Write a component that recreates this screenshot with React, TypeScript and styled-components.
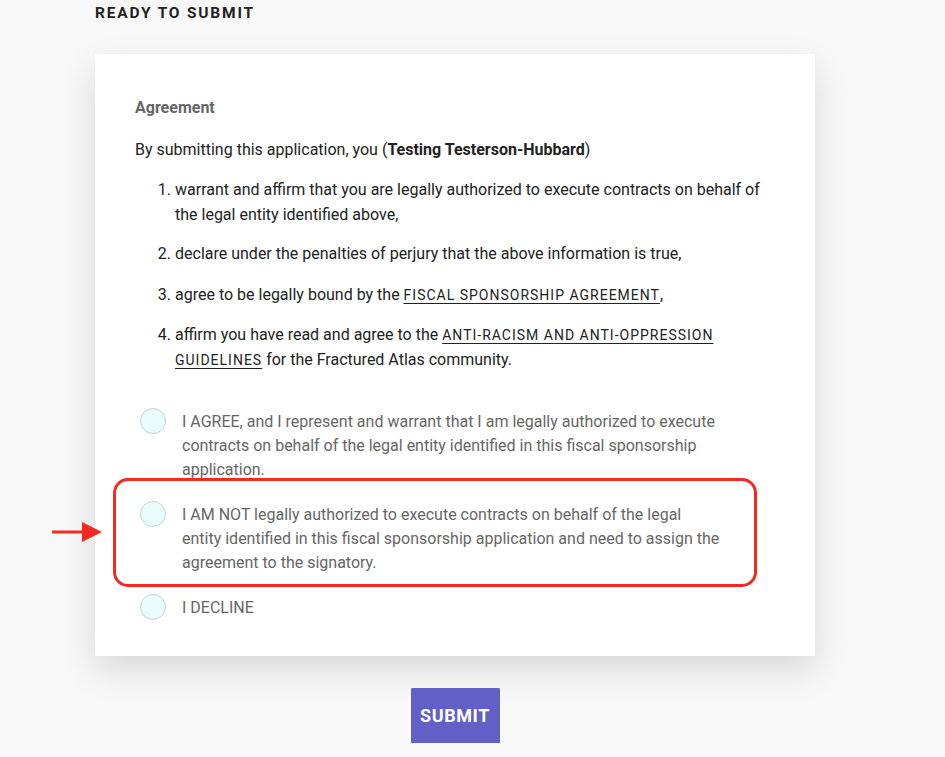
import React from "react";
import styled, { createGlobalStyle } from "styled-components";

const Global = createGlobalStyle`
  html, body { margin: 0; padding: 0; background: #f8f8f8; }
  body { font-family: Roboto, "Liberation Sans", Arial, sans-serif; color: #222; }
  * { box-sizing: border-box; }
`;

const Page = styled.div`
  width: 945px;
  min-height: 757px;
  padding: 4px 0 0 95px;
  position: relative;
  overflow: hidden;
`;

const Heading = styled.h2`
  margin: 0;
  font-size: 15.5px;
  line-height: 18px;
  font-weight: 700;
  letter-spacing: 1.8px;
  color: #222;
`;

const Column = styled.div`
  width: 720px;
  display: flex;
  flex-direction: column;
  align-items: center;
`;

const Card = styled.section`
  width: 720px;
  margin-top: 32px;
  background: #fff;
  padding: 41px 40px 36px;
  box-shadow: 0 14px 32px rgba(0, 0, 0, 0.13);
`;

const Label = styled.div`
  font-size: 16px;
  line-height: 26px;
  font-weight: 700;
  color: #666;
`;

const Para = styled.p`
  margin: 16px 0 0;
  font-size: 16px;
  line-height: 25px;
  color: #222;
`;

const List = styled.ol`
  margin: 16px 0 0;
  padding-left: 40px;
  font-size: 16px;
  line-height: 24.5px;
`;

const Item = styled.li`
  margin-bottom: 16px;
  padding-left: 0;
  &:first-child { margin-bottom: 15px; }
  &:last-child { margin-bottom: 0; }
`;

const DocLink = styled.a`
  font-size: 14px;
  line-height: 16px;
  letter-spacing: 1px;
  text-transform: uppercase;
  color: #222;
  text-decoration: underline;
  text-underline-offset: 3px;
`;

const Options = styled.div`
  margin-top: 38px;
  display: flex;
  flex-direction: column;
  gap: 21px;
`;

const Option = styled.label`
  position: relative;
  display: flex;
  align-items: flex-start;
  gap: 16px;
  padding-left: 5px;
  cursor: pointer;
`;

const Radio = styled.span`
  flex: none;
  width: 26px;
  height: 26px;
  margin-top: -2px;
  border-radius: 50%;
  background: #e8fdfc;
  border: 1px solid #c5d2d2;
`;

const OptionText = styled.span`
  width: 540px;
  font-size: 16px;
  line-height: 24px;
  color: #666;
`;

const Highlight = styled.span`
  position: absolute;
  left: -22px;
  top: -25px;
  width: 644px;
  height: 109px;
  border: 3px solid #f22a22;
  border-radius: 15px;
  pointer-events: none;
`;

const Arrow = styled.svg`
  position: absolute;
  left: -83px;
  top: 19px;
`;

const SubmitButton = styled.button`
  margin-top: 32px;
  width: 89px;
  height: 55px;
  border: none;
  border-radius: 1px;
  background: #6260c6;
  color: #fff;
  font-family: Roboto, "Liberation Sans", Arial, sans-serif;
  font-size: 18px;
  font-weight: 700;
  letter-spacing: 0.6px;
  padding: 0;
  cursor: pointer;
`;

export default function App() {
  return (
    <>
      <Global />
      <Page>
        <Heading>READY TO SUBMIT</Heading>
        <Column>
          <Card>
            <Label>Agreement</Label>
            <Para>
              By submitting this application, you (<strong>Testing Testerson-Hubbard</strong>)
            </Para>
            <List>
              <Item>
                warrant and affirm that you are legally authorized to execute contracts on behalf of
                the legal entity identified above,
              </Item>
              <Item>declare under the penalties of perjury that the above information is true,</Item>
              <Item>
                agree to be legally bound by the <DocLink href="#">Fiscal Sponsorship Agreement</DocLink>,
              </Item>
              <Item>
                affirm you have read and agree to the{" "}
                <DocLink href="#">Anti-Racism and Anti-Oppression Guidelines</DocLink> for the Fractured
                Atlas community.
              </Item>
            </List>
            <Options>
              <Option>
                <Radio />
                <OptionText>
                  I AGREE, and I represent and warrant that I am legally authorized to execute contracts
                  on behalf of the legal entity identified in this fiscal sponsorship application.
                </OptionText>
              </Option>
              <Option>
                <Highlight />
                <Arrow width="50" height="20" viewBox="0 0 50 20">
                  <rect x="0" y="8.5" width="32" height="3" fill="#f22a22" />
                  <polygon points="30,0 50,10 30,20" fill="#f22a22" />
                </Arrow>
                <Radio />
                <OptionText>
                  I AM NOT legally authorized to execute contracts on behalf of the legal entity
                  identified in this fiscal sponsorship application and need to assign the agreement to
                  the signatory.
                </OptionText>
              </Option>
              <Option>
                <Radio />
                <OptionText>I DECLINE</OptionText>
              </Option>
            </Options>
          </Card>
          <SubmitButton>SUBMIT</SubmitButton>
        </Column>
      </Page>
    </>
  );
}
